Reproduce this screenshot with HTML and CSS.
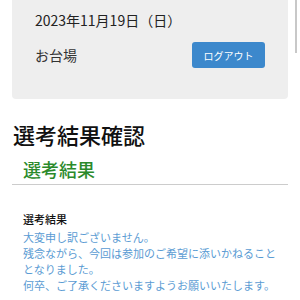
FILE: index.html
```html
<!DOCTYPE html>
<html lang="ja">
<head>
    <meta charset="UTF-8">
    <meta name="viewport" content="width=device-width, initial-scale=1.0">
    <title>選考結果確認</title>
    <link rel="stylesheet" href="styles.css">
</head>
<body>

<div class="scroll-bar"></div>

<div class="info-card">
    <p class="event-date">2023年11月19日（日）</p>
    <div class="info-row">
        <span class="venue">お台場</span>
        <button class="logout-btn" type="button">ログアウト</button>
    </div>
</div>

<h1 class="page-title">選考結果確認</h1>

<div class="section">
    <h2 class="section-title">選考結果</h2>
    <h3 class="result-label">選考結果</h3>
    <p class="result-text">大変申し訳ございません。<br>残念ながら、今回は参加のご希望に添いかねることとなりました。<br>何卒、ご了承くださいますようお願いいたします。</p>
</div>

</body>
</html>
```

FILE: styles.css
```css
body {
    margin: 0;
    padding: 0 12px;
    background: #fff;
    font-family: "Noto Sans CJK JP", "Noto Sans", sans-serif;
    color: #222;
}

/* Scroll indicator */
.scroll-bar {
    position: absolute;
    top: 0;
    right: 3px;
    width: 2px;
    height: 53px;
    background: #c8c8c8;
}

/* Top info card */
.info-card {
    margin-top: -12px;
    padding: 22px 23px 31px;
    background: #eeeeee;
    border-radius: 4px;
}

.event-date {
    margin: 0;
    font-size: 14px;
    line-height: 20px;
    color: #222;
}

.info-row {
    display: flex;
    justify-content: space-between;
    align-items: center;
    margin-top: 12px;
}

.venue {
    font-size: 14px;
    line-height: 20px;
    color: #333;
}

.logout-btn {
    width: 73px;
    height: 26px;
    padding: 0;
    border: none;
    border-radius: 3px;
    background: #3c88cc;
    color: #fff;
    font-family: inherit;
    font-size: 10px;
    cursor: pointer;
}

.page-title {
    margin: 20px 0 0 1px;
    font-size: 22px;
    line-height: 30px;
    font-weight: 500;
    color: #111;
}

.section-title {
    margin: 7px 0 0;
    padding: 0 0 2px 11px;
    font-size: 18px;
    line-height: 26px;
    font-weight: 500;
    color: #2b8a2b;
    border-bottom: 1px solid #cccccc;
}

.result-label {
    margin: 26px 0 0 11px;
    font-size: 11px;
    line-height: 16px;
    font-weight: 500;
    color: #111;
}

.result-text {
    margin: 2px 0 0 11px;
    width: 253px;
    font-size: 11px;
    line-height: 16px;
    color: #5a9bd3;
}
```
